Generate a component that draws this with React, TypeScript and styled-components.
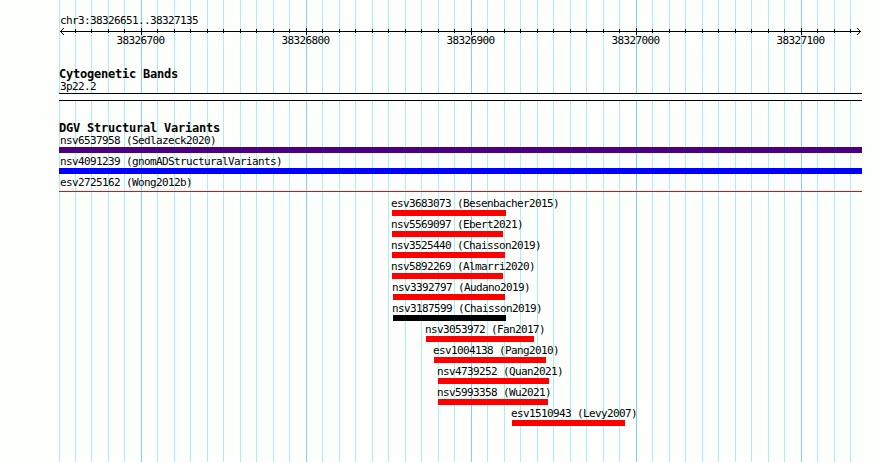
import React from 'react'
import styled, { createGlobalStyle } from 'styled-components'

const LEFT = 59
const WIDTH = 803
const STEP = 16.5
const FIRST_MAJOR = 141

const ticks = Array.from({ length: 49 }, (_, i) => {
  const k = i - 5
  return {
    x: Math.max(0, Math.floor(FIRST_MAJOR + k * STEP) - LEFT),
    major: k % 10 === 0,
    edge: k === -5,
  }
})

const labels = ['38326700', '38326800', '38326900', '38327000', '38327100']

interface Variant {
  name: string
  start: number
  end: number
  color: string
  thin?: boolean
}

const variants: Variant[] = [
  { name: 'nsv6537958 (Sedlazeck2020)', start: 0, end: 803, color: '#4b0082' },
  { name: 'nsv4091239 (gnomADStructuralVariants)', start: 0, end: 803, color: '#0000ff' },
  { name: 'esv2725162 (Wong2012b)', start: 0, end: 803, color: '#e60d0d', thin: true },
  { name: 'esv3683073 (Besenbacher2015)', start: 333, end: 447, color: '#ff0000' },
  { name: 'nsv5569097 (Ebert2021)', start: 333, end: 444, color: '#ff0000' },
  { name: 'nsv3525440 (Chaisson2019)', start: 333, end: 446, color: '#ff0000' },
  { name: 'nsv5892269 (Almarri2020)', start: 333, end: 444, color: '#ff0000' },
  { name: 'nsv3392797 (Audano2019)', start: 334, end: 446, color: '#ff0000' },
  { name: 'nsv3187599 (Chaisson2019)', start: 334, end: 447, color: '#000000' },
  { name: 'nsv3053972 (Fan2017)', start: 367, end: 475, color: '#ff0000' },
  { name: 'esv1004138 (Pang2010)', start: 375, end: 487, color: '#ff0000' },
  { name: 'nsv4739252 (Quan2021)', start: 379, end: 490, color: '#ff0000' },
  { name: 'nsv5993358 (Wu2021)', start: 379, end: 489, color: '#ff0000' },
  { name: 'esv1510943 (Levy2007)', start: 453, end: 566, color: '#ff0000' },
]

const GlobalStyle = createGlobalStyle`
  body {
    margin: 0;
    background: #fdfffc;
  }
`

const Browser = styled.main`
  position: relative;
  box-sizing: border-box;
  width: 890px;
  height: 462px;
  padding: 15px 28px 0 ${LEFT}px;
  overflow: hidden;
  color: #000;
  font-family: 'DejaVu Sans Mono', 'Liberation Mono', monospace;
  font-size: 11px;
  line-height: 12px;
  letter-spacing: -0.622px;
  white-space: pre;
`

/* sits behind every track */
const Grid = styled.svg`
  position: absolute;
  top: 0;
  left: ${LEFT}px;
  shape-rendering: crispEdges;
`

const Tracks = styled.div`
  position: relative;
`

const Region = styled.div`
  height: 12px;
  padding-left: 1px;
`

const Ruler = styled.svg`
  display: block;
  shape-rendering: crispEdges;
`

const Scale = styled.div`
  display: grid;
  grid-template-columns: repeat(5, 165px);
  width: 825px;
  height: 12px;
  margin-left: -1px;
  text-align: center;
`

const Title = styled.h2`
  height: 13px;
  margin: 0;
  font-size: 12px;
  font-weight: bold;
  line-height: 13px;
  letter-spacing: -0.224px;
`

const BandTrack = styled.section`
  margin-top: 21px;
`

const BandName = styled.div`
  height: 12px;
  padding-left: 1px;
`

const Band = styled.div`
  box-sizing: border-box;
  width: ${WIDTH}px;
  height: 8px;
  border: solid #000;
  border-width: 1px 0;
  background: #fdfffc;
`

const VariantTrack = styled.section`
  margin-top: 21px;
`

const Row = styled.div<{ $start: number }>`
  height: 21px;
  padding-left: ${props => props.$start}px;
`

const Name = styled.div<{ $wide: boolean }>`
  height: 12px;
  margin-left: ${props => (props.$wide ? 1 : -1)}px;
`

const Bar = styled.div<{ $width: number; $color: string; $thin?: boolean }>`
  width: ${props => props.$width}px;
  height: ${props => (props.$thin ? 1 : 6)}px;
  margin-top: ${props => (props.$thin ? 2 : 0)}px;
  background: ${props => props.$color};
`

const App: React.FC = () => (
  <>
    <GlobalStyle />
    <Browser>
      <Grid width={WIDTH} height={462}>
        {ticks.map(t => (
          <rect key={t.x} x={t.x} width={1} height={462} fill={t.major ? '#87ceeb' : '#afeeee'} />
        ))}
      </Grid>
      <Tracks>
        <Region>chr3:38326651..38327135</Region>
        <Ruler width={WIDTH} height={8} viewBox="0 27 803 8">
          <rect x={1} y={31} width={801} height={1} />
          {ticks
            .filter(t => !t.edge)
            .map(t => (
              <rect key={t.x} x={t.x} y={t.major ? 28 : 29} width={1} height={t.major ? 7 : 4} />
            ))}
          <path d="M4 28h1v1h-1zM3 29h1v1h-1zM2 30h1v1h-1zM2 32h1v1h-1zM3 33h1v1h-1zM4 34h1v1h-1z" />
          <path d="M798 28h1v1h-1zM799 29h1v1h-1zM800 30h1v1h-1zM800 32h1v1h-1zM799 33h1v1h-1zM798 34h1v1h-1z" />
        </Ruler>
        <Scale>
          {labels.map(label => (
            <span key={label}>{label}</span>
          ))}
        </Scale>
        <BandTrack>
          <Title>Cytogenetic Bands</Title>
          <BandName>3p22.2</BandName>
          <Band />
        </BandTrack>
        <VariantTrack>
          <Title>DGV Structural Variants</Title>
          {variants.map(v => (
            <Row key={v.name} $start={v.start}>
              <Name $wide={v.start === 0}>{v.name}</Name>
              <Bar $width={v.end - v.start} $color={v.color} $thin={v.thin} />
            </Row>
          ))}
        </VariantTrack>
      </Tracks>
    </Browser>
  </>
)

export default App
